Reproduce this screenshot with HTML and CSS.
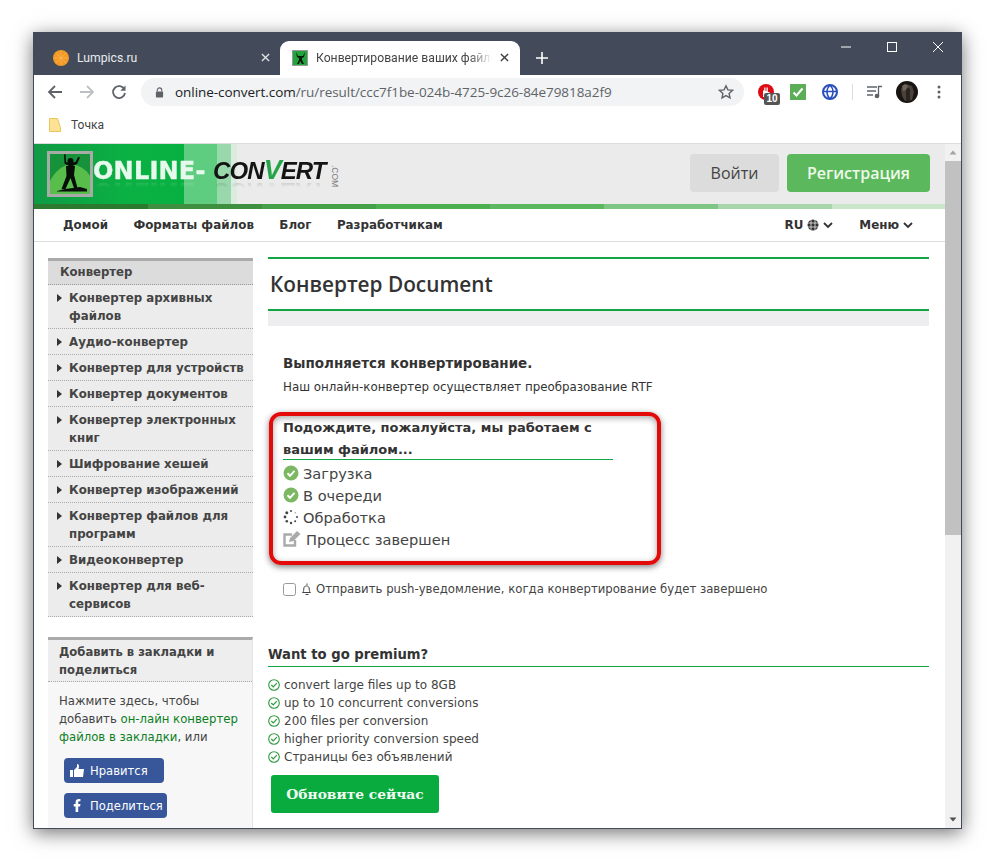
FILE: index.html
```html
<!DOCTYPE html>
<html lang="ru">
<head>
<meta charset="utf-8">
<title>Конвертирование ваших файлов</title>
<link rel="stylesheet" href="styles.css">
</head>
<body>
<div class="window">
  <div class="tabstrip">
    <div class="tab tab-off">
      <svg class="fav" viewBox="0 0 16 16"><circle cx="8" cy="8" r="8" fill="#f39a26"/><path d="M8 1v14M1 8h14M3 3l10 10M13 3L3 13" stroke="#fbb552" stroke-width=".8"/></svg>
      <span class="tab-title">Lumpics.ru</span>
      <svg class="tab-x" viewBox="0 0 10 10"><path d="M1 1l8 8M9 1L1 9" stroke="#dfe1e5" stroke-width="1.5"/></svg>
    </div>
    <div class="tab tab-on">
      <svg class="fav" viewBox="0 0 16 16"><rect width="16" height="16" fill="#9a9a9a"/><rect x="1" y="1" width="14" height="14" fill="#22a33b"/><path d="M4 2l1 5 2 1v2l-2 4h2l1-3 2 3h2l-2-4V8l2-1 1-5-2 4H6z" fill="#0a1a0c"/></svg>
      <span class="tab-title tab-title-dark">Конвертирование ваших файлов</span>
      <svg class="tab-x" viewBox="0 0 10 10"><path d="M1 1l8 8M9 1L1 9" stroke="#3c4043" stroke-width="1.6"/></svg>
    </div>
    <svg class="newtab" viewBox="0 0 12 12"><path d="M6 0v12M0 6h12" stroke="#fff" stroke-width="1.6"/></svg>
    <div class="winbtns">
      <svg viewBox="0 0 12 12"><path d="M1 6h10" stroke="#fff"/></svg>
      <svg viewBox="0 0 12 12"><rect x="1.500" y="1.500" width="9" height="9" fill="none" stroke="#fff"/></svg>
      <svg viewBox="0 0 12 12"><path d="M1 1l10 10M11 1L1 11" stroke="#fff"/></svg>
    </div>
  </div>

  <div class="toolbar">
    <svg class="nav-ic" viewBox="0 0 16 16"><path d="M15 8H2M8 2L2 8l6 6" fill="none" stroke="#5f6368" stroke-width="1.800"/></svg>
    <svg class="nav-ic" viewBox="0 0 16 16"><path d="M1 8h13M8 2l6 6-6 6" fill="none" stroke="#bdc1c6" stroke-width="1.800"/></svg>
    <svg class="nav-ic" viewBox="0 0 16 16"><path d="M13.500 5.500A6 6 0 1 0 14 9" fill="none" stroke="#5f6368" stroke-width="1.800"/><path d="M14.500 1.500v5.200H9.300z" fill="#5f6368"/></svg>
    <div class="omnibox">
      <svg class="lock" viewBox="0 0 10 12"><path d="M2.500 5V3.400a2.500 2.500 0 0 1 5 0V5" fill="none" stroke="#5f6368" stroke-width="1.200"/><rect x="1" y="5" width="8" height="6.500" rx="1" fill="#5f6368"/></svg>
      <span class="url">online-convert.com<span class="url-dim">/ru/result/ccc7f1be-024b-4725-9c26-84e79818a2f9</span></span>
      <svg class="star" viewBox="0 0 16 16"><path d="M8 1.800l1.900 4.100 4.500.5-3.300 3 .9 4.400L8 11.600l-4 2.200.9-4.400-3.300-3 4.500-.5z" fill="none" stroke="#5f6368" stroke-width="1.400"/></svg>
    </div>
    <div class="exts">
      <div class="ext ext-abp">
        <svg viewBox="0 0 16 16"><circle cx="8" cy="8" r="8" fill="#dd0b13"/><path d="M5 13V6.500h1.200V3.500h1.300V7h1V3.500h1.300V8h1.700v5z" fill="#fff"/></svg>
        <span class="badge">10</span>
      </div>
      <svg class="ext" viewBox="0 0 16 16"><rect width="16" height="16" fill="#5cad57"/><path d="M3.500 8.500l3 3 6-7" fill="none" stroke="#fff" stroke-width="2"/></svg>
      <svg class="ext" viewBox="0 0 16 16"><circle cx="8" cy="8" r="7" fill="#fff" stroke="#2a4ebd" stroke-width="2"/><path d="M8 1c-4 4-4 10 0 14M8 1c4 4 4 10 0 14M1.500 7.500h13" fill="none" stroke="#2a4ebd" stroke-width="1.500"/></svg>
      <span class="ext-sep"></span>
      <svg class="ext-media" viewBox="0 0 16 14"><path d="M0 2h10M0 6h9M0 10h6" stroke="#5f6368" stroke-width="1.300"/><path d="M11.500 11V1.500H15" fill="none" stroke="#5f6368" stroke-width="1.300"/><circle cx="10" cy="11" r="2.300" fill="#5f6368"/></svg>
      <svg class="avatar" viewBox="0 0 22 22"><circle cx="11" cy="11" r="11" fill="#191412"/><path d="M5 8l5-5 6 2 2 6-2 8-7 1-3-5z" fill="#4a413b"/><path d="M10 6l4 2v11l-4 1z" fill="#2a2421"/><path d="M6 5l3-2 3 2-2 4-3 1z" fill="#6f655d"/></svg>
      <svg class="kebab" viewBox="0 0 4 14"><circle cx="2" cy="2" r="1.500" fill="#5f6368"/><circle cx="2" cy="7" r="1.500" fill="#5f6368"/><circle cx="2" cy="12" r="1.500" fill="#5f6368"/></svg>
    </div>
  </div>

  <div class="bookmarks">
    <svg class="folder" viewBox="0 0 12 14"><path d="M.5.500h8l3 9v4H.5z" fill="#fde293" stroke="#e9c55a"/></svg>
    <span>Точка</span>
  </div>

  <div class="viewport">
    <div class="page">
      <header class="site-head">
        <div class="bands"><i class="b1"></i><i class="b2"></i><i class="b3"></i><i class="b4"></i></div>
        <div class="logo">
          <svg class="logo-ic" viewBox="0 0 46 46"><rect width="46" height="46" fill="#a8aaa8"/><rect x="3" y="3" width="40" height="40" fill="#16923a"/><path d="M3 43V30C8 20 16 14 24 13c8 1 15 5 19 12v18z" fill="#58bd4b"/><path d="M17 3.500l.5 9 6 3.500 6.500-3 3-6.500-1.800-.6-2.700 5-6.500 1-3-1-.5-7.900z" fill="#070d07"/><circle cx="23.500" cy="10" r="3" fill="#070d07"/><path d="M19 15h9l-1 9 3.500 13h-3.500l-3.500-10-5 11h-4l5-13z" fill="#070d07"/><path d="M10 40l8-2 8-1 7-1 7 2v2.500H10z" fill="#070d07"/></svg>
          <span class="logo-w">ONLINE-</span><span class="logo-k">CON<em>V</em>ERT</span><span class="logo-com">.COM</span>
        </div>
        <div class="auth">
          <a class="btn-login">Войти</a>
          <a class="btn-reg">Регистрация</a>
        </div>
      </header>
      <div class="stripes"><i class="s1"></i><i class="s2"></i><i class="s3"></i><i class="s4"></i><i class="s5"></i><i class="s6"></i><i class="s7"></i><i class="s8"></i></div>
      <nav class="mainnav">
        <a>Домой</a><a>Форматы файлов</a><a>Блог</a><a>Разработчикам</a>
        <span class="spacer"></span>
        <a class="nav-r">RU
          <svg class="globe" viewBox="0 0 12 12"><circle cx="6" cy="6" r="5.500" fill="#333"/><path d="M0 4h12M0 8h12M4 0v12M8 0v12" stroke="#fff" stroke-width=".7"/></svg>
          <svg class="chev" viewBox="0 0 10 7"><path d="M1 1l4 4 4-4" fill="none" stroke="#333" stroke-width="1.800"/></svg></a>
        <a class="nav-r">Меню
          <svg class="chev" viewBox="0 0 10 7"><path d="M1 1l4 4 4-4" fill="none" stroke="#333" stroke-width="1.800"/></svg></a>
      </nav>

      <div class="layout">
        <aside class="side">
          <section class="side-menu">
            <h3>Конвертер</h3>
            <ul>
              <li>Конвертер архивных файлов</li>
              <li>Аудио-конвертер</li>
              <li>Конвертер для устройств</li>
              <li>Конвертер документов</li>
              <li>Конвертер электронных книг</li>
              <li>Шифрование хешей</li>
              <li>Конвертер изображений</li>
              <li>Конвертер файлов для программ</li>
              <li>Видеоконвертер</li>
              <li>Конвертер для веб-сервисов</li>
            </ul>
          </section>
          <section class="side-share">
            <h4>Добавить в закладки и поделиться</h4>
            <div class="share-body">
              <p>Нажмите здесь, чтобы добавить <a>он-лайн конвертер файлов в закладки</a>, или</p>
              <a class="fb fb-like"><svg viewBox="0 0 14 13"><path d="M0 6h3v7H0zM4 6l3-3V0c2 0 2.500 2 1.500 5H14l-1 8H4z" fill="#fff"/></svg>Нравится</a>
              <a class="fb fb-share"><svg class="fb-f" viewBox="0 0 8 14"><path d="M2.500 14V8H.5V5.500h2V3.500C2.500 1 4 0 6 0h1.700v2.400H6.500c-1 0-1.200.5-1.200 1.200v1.900h2.400L7.300 8H5.300v6z" fill="#fff"/></svg>Поделиться</a>
            </div>
          </section>
        </aside>

        <main class="content">
          <h1>Конвертер Document</h1>
          <div class="grayband"></div>
          <div class="progress-box">
            <h2>Выполняется конвертирование.</h2>
            <p class="sub">Наш онлайн-конвертер осуществляет преобразование RTF</p>
            <h3 class="wait">Подождите, пожалуйста, мы работаем с вашим файлом...</h3>
            <ul class="steps">
              <li><svg class="st" viewBox="0 0 16 16"><circle cx="8" cy="8" r="7.500" fill="#7cb863"/><path d="M4.500 8.300l2.500 2.500 4.500-5" fill="none" stroke="#fff" stroke-width="2"/></svg>Загрузка</li>
              <li><svg class="st" viewBox="0 0 16 16"><circle cx="8" cy="8" r="7.500" fill="#7cb863"/><path d="M4.500 8.300l2.500 2.500 4.500-5" fill="none" stroke="#fff" stroke-width="2"/></svg>В очереди</li>
              <li><svg class="st" viewBox="0 0 16 16"><g fill="#444"><circle cx="8" cy="2" r="1"/><circle cx="3.800" cy="3.800" r="1.500"/><circle cx="2" cy="8" r="1.400"/><circle cx="3.800" cy="12.200" r="1.300"/><circle cx="8" cy="14" r="1.200"/><circle cx="12.200" cy="12.200" r="1"/><circle cx="14" cy="8" r="1"/><circle cx="12.200" cy="3.800" r=".5"/></g></svg>Обработка</li>
              <li class="st-last"><svg class="st st-edit" viewBox="0 0 18 16"><path d="M12 9v5.500H1.500V3.500H9" fill="none" stroke="#aaa" stroke-width="2.400"/><path d="M6 11l1-4 7-7 3.500 3-7 7z" fill="#aaa"/></svg>Процесс завершен</li>
            </ul>
            <label class="push"><input type="checkbox" class="push-cb"><svg class="bell" viewBox="0 0 12 12"><path d="M1.500 9.500c1.500-1 1-3 1.500-5s4.500-2 5 0 0 4 1.500 5zM4.500 11.500h3M6 .5v1.500" fill="none" stroke="#444"/></svg>Отправить push-уведомление, когда конвертирование будет завершено</label>
          </div>
          <h2 class="prem">Want to go premium?</h2>
          <ul class="perks">
            <li><svg viewBox="0 0 12 12"><circle cx="6" cy="6" r="5.300" fill="none" stroke="#2f9a41" stroke-width="1.100"/><path d="M3.300 6l2 2 3.500-3.800" fill="none" stroke="#2f9a41" stroke-width="1.200"/></svg>convert large files up to 8GB</li>
            <li><svg viewBox="0 0 12 12"><circle cx="6" cy="6" r="5.300" fill="none" stroke="#2f9a41" stroke-width="1.100"/><path d="M3.300 6l2 2 3.500-3.800" fill="none" stroke="#2f9a41" stroke-width="1.200"/></svg>up to 10 concurrent conversions</li>
            <li><svg viewBox="0 0 12 12"><circle cx="6" cy="6" r="5.300" fill="none" stroke="#2f9a41" stroke-width="1.100"/><path d="M3.300 6l2 2 3.500-3.800" fill="none" stroke="#2f9a41" stroke-width="1.200"/></svg>200 files per conversion</li>
            <li><svg viewBox="0 0 12 12"><circle cx="6" cy="6" r="5.300" fill="none" stroke="#2f9a41" stroke-width="1.100"/><path d="M3.300 6l2 2 3.500-3.800" fill="none" stroke="#2f9a41" stroke-width="1.200"/></svg>higher priority conversion speed</li>
            <li><svg viewBox="0 0 12 12"><circle cx="6" cy="6" r="5.300" fill="none" stroke="#2f9a41" stroke-width="1.100"/><path d="M3.300 6l2 2 3.500-3.800" fill="none" stroke="#2f9a41" stroke-width="1.200"/></svg>Страницы без объявлений</li>
          </ul>
          <a class="btn-up">Обновите сейчас</a>
        </main>
      </div>
    </div>
    <div class="scrollbar">
      <svg class="sb-arrow" viewBox="0 0 16 17"><path d="M4.500 10.500L8 6.500l3.500 4z" fill="#a3a3a3"/></svg>
      <div class="sb-track"><div class="sb-thumb"></div></div>
      <svg class="sb-arrow" viewBox="0 0 16 17"><path d="M4.500 6.500L8 10.500l3.500-4z" fill="#505050"/></svg>
    </div>
    <div class="redbox"></div>
  </div>
</div>
</body>
</html>
```
FILE: styles.css
```css
* { box-sizing: border-box; }
html, body { margin: 0; height: 100%; overflow: hidden; background: #fff; }
body { padding: 32px 32px 0 33px; font-family: "DejaVu Sans", Verdana, sans-serif; color: #333; }
ul { list-style: none; margin: 0; padding: 0; }
h1, h2, h3, h4, p { margin: 0; }

.window { width: 929px; height: 797px; display: flex; flex-direction: column; background: #fff; border: solid #434a5a; border-width: 0 1px 1px 1px; box-shadow: 0 4px 18px rgba(0,0,0,.55); }

.tabstrip { height: 43px; flex: none; background: #434a5a; display: flex; align-items: flex-end; position: relative; }
.tab { height: 34px; display: flex; align-items: center; font-family: Roboto, "Noto Sans", sans-serif; font-size: 12.200px; }
.tab-off { width: 246px; padding: 0 0 1px 19px; color: #e8eaed; }
.tab-on { width: 240px; padding: 0 0 1px 12px; background: #fff; border-radius: 9px 9px 0 0; color: #444; }
.fav { width: 16px; height: 16px; flex: none; margin-right: 8px; }
.tab-title { flex: 1; overflow: hidden; white-space: nowrap; }
.tab-title-dark { -webkit-mask-image: linear-gradient(90deg, #000 85%, transparent 98%); mask-image: linear-gradient(90deg, #000 85%, transparent 98%); }
.tab-x { width: 9px; height: 9px; flex: none; margin: 0 10px 0 8px; }
.tab-on .tab-x { margin: 0 11px 0 4px; }
.newtab { width: 12px; height: 12px; margin: 0 0 11px 16px; }
.winbtns { position: absolute; top: 0; right: 0; display: flex; gap: 34px; padding: 9px 17px 0 0; }
.winbtns svg { width: 12px; height: 12px; }

.toolbar { height: 34px; flex: none; display: flex; align-items: center; padding: 0 14px 0 13px; background: #fff; }
.nav-ic { width: 16px; height: 16px; margin-right: 16px; flex: none; }
.omnibox { width: 603px; height: 28px; margin-left: -2px; border-radius: 14px; background: #f1f3f4; display: flex; align-items: center; padding: 0 10px 0 14px; font-family: "Open Sans", "Noto Sans", sans-serif; font-size: 13.500px; letter-spacing: -.05px; }
.lock { width: 9px; height: 11px; margin-right: 11px; flex: none; }
.url { flex: 1; color: #202124; white-space: nowrap; overflow: hidden; }
.url-dim { color: #5f6368; }
.star { width: 16px; height: 16px; flex: none; }
.exts { flex: 1; display: flex; align-items: center; position: relative; padding-left: 14px; }
.ext { width: 16px; height: 16px; flex: none; margin-right: 16px; display: block; position: relative; }
.ext-abp svg { width: 16px; height: 16px; display: block; }
.badge { position: absolute; left: 6px; top: 9px; width: 16px; height: 12px; border-radius: 2px; background: #555; color: #fff; font: bold 10px/12px "Liberation Sans", sans-serif; text-align: center; }
.ext-sep { width: 1px; height: 16px; background: #dadce0; margin-right: 14px; margin-left: -2px; }
.ext-media { width: 16px; height: 14px; flex: none; margin-right: 13px; }
.avatar { width: 22px; height: 22px; flex: none; margin-right: 19px; }
.kebab { width: 4px; height: 14px; flex: none; }

.bookmarks { height: 35px; flex: none; display: flex; align-items: center; padding: 0 0 2px 15px; font-family: Roboto, "Noto Sans", sans-serif; font-size: 12px; color: #444; border-bottom: 1px solid #dadce0; background: #fff; }
.folder { width: 12px; height: 14px; margin-right: 10px; }

.viewport { flex: 1; min-height: 0; display: flex; position: relative; overflow: hidden; }
.page { width: 911px; flex: none; overflow: hidden; }

.site-head { height: 60px; background: #ebebeb; display: flex; align-items: flex-start; position: relative; }
.bands { position: absolute; inset: 0 auto 0 0; display: flex; }
.bands i { display: block; height: 100%; }
.b1 { width: 150px; background: linear-gradient(90deg, #109a45, #0bb043 60%, #07b141); }
.b2 { width: 33px; background: #5ecd80; }
.b3 { width: 14px; background: #98d8ab; }
.b4 { width: 6px; background: #dcebe0; }
.logo { position: relative; display: flex; align-items: flex-start; padding: 7px 0 0 13px; font-weight: bold; }
.logo-ic { width: 46px; height: 46px; flex: none; margin-right: 0; }
.logo-w, .logo-k { display: block; margin-top: 6px; line-height: 28px; white-space: nowrap; -webkit-box-reflect: below -8px linear-gradient(transparent 62%, rgba(255,255,255,.28)); }
.logo-w { font-family: "DejaVu Sans", sans-serif; font-size: 24px; color: #e6f9ec; -webkit-text-stroke: .4px #e6f9ec; letter-spacing: .2px; width: 120px; }
.logo-k { font-family: "Liberation Sans", Arial, sans-serif; font-size: 24px; font-style: italic; color: #141414; letter-spacing: -.9px; }
.logo-k em { color: #25a548; font-style: italic; font-size: 27px; line-height: 20px; }
.logo-com { font-family: "Liberation Sans", Arial, sans-serif; font-size: 8.500px; font-weight: normal; color: #777; transform: rotate(90deg); width: 20px; margin: 19px 0 0 -1px; white-space: nowrap; }
.auth { margin-left: auto; display: flex; gap: 8px; padding: 10px 15px 0 0; position: relative; }
.btn-login, .btn-reg { height: 38px; display: flex; align-items: center; justify-content: center; border-radius: 4px; font-family: "Open Sans", "Noto Sans", sans-serif; font-size: 16px; }
.btn-login { width: 89px; background: #dcdcdc; color: #444; }
.btn-reg { width: 143px; background: #5cb85c; color: #eef9ea; font-weight: 600; }

.stripes { height: 5px; display: flex; }
.stripes i { flex: 0 0 114px; display: block; }
.s1 { background: #2b7a2f; } .s2 { background: #3f8f41; } .s3 { background: #45a049; } .s4 { background: #4caf50; }
.s5 { background: #5cb860; } .s6 { background: #7fc583; } .s7 { background: #a9d5aa; } .s8 { background: #c9e5ca; }

.mainnav { height: 33px; display: flex; align-items: center; border-bottom: 1px solid #ddd; padding: 0 32px 1px 29px; font-size: 11.900px; font-weight: bold; color: #333; }
.mainnav a { margin-right: 25.400px; white-space: nowrap; display: flex; align-items: center; }
.mainnav .nav-r { margin-right: 0; margin-left: 26px; }
.spacer { flex: 1; }
.globe { width: 12px; height: 12px; margin: 1px 0 0 4px; }
.chev { width: 10px; height: 7px; margin: 1px 0 0 4px; }

.layout { display: flex; align-items: flex-start; padding: 16px 16px 0 14px; gap: 15px; }
.side { width: 205px; flex: none; }
.side-menu { border-top: 3px solid #aaa; background: #ececec; }
.side-menu h3 { height: 24px; background: #dcdcdc; border-bottom: 1px dotted #999; font-size: 11.700px; line-height: 23px; padding-left: 12px; font-weight: bold; color: #444; }
.side-menu li { position: relative; padding: 4px 4px 3px 21px; font-size: 11.800px; line-height: 18px; font-weight: bold; color: #444; border-bottom: 1px dotted #aaa; }
.side-menu li::before { content: ""; position: absolute; left: 9px; top: 9px; border: solid transparent; border-width: 4.500px 0 4.500px 5px; border-left-color: #333; }
.side-share { margin-top: 20px; border-top: 3px solid #aaa; background: #f7f7f8; border-right: 1px solid #e4e4e4; height: 200px; }
.side-share h4 { background: #eee; border-bottom: 1px dotted #aaa; padding: 3px 11px 2px; font-size: 11.600px; line-height: 18px; font-weight: bold; color: #444; }
.share-body { padding: 10px 0 0 11px; font-size: 11.700px; line-height: 18px; color: #444; }
.share-body p a { color: #0d7f1e; }
.fb { display: flex; align-items: center; height: 25px; margin: 0 0 10px 5px; background: #38579a; color: #fff; border-radius: 4px; font-size: 11.600px; padding-left: 6px; }
.fb svg { width: 14px; height: 13px; margin-right: 6px; }
.fb .fb-f { width: 8px; height: 13px; margin: 0 9px 0 3px; }
.fb-like { width: 100px; margin-top: 12px; }
.fb-share { width: 103px; }

.content { flex: 1; min-width: 0; margin-top: -1px; }
.content h1 { height: 54px; border-top: 2px solid #12a544; border-bottom: 2px solid #12a544; padding-left: 2px; font-size: 20.800px; line-height: 51px; font-weight: 600; color: #333; font-family: "Open Sans", sans-serif; }
.grayband { height: 15px; background: #eeeef0; }
.progress-box { padding: 28px 0 0 15px; }
.progress-box h2 { font-size: 13.500px; line-height: 18px; font-weight: bold; }
.sub { margin-top: 6px; font-size: 11.850px; line-height: 18px; }
.wait { width: 330px; height: 45px; margin-top: 19px; padding-top: 2px; border-bottom: 1px solid #12a544; font-size: 13px; line-height: 22px; font-weight: bold; }
.steps { margin-top: 2px; }
.steps li { height: 22px; display: flex; align-items: center; font-size: 14.600px; color: #444; }
.st { width: 16px; height: 16px; margin-right: 4px; flex: none; }
.st-edit { width: 18px; margin-right: 5px; }
.push { display: flex; align-items: center; margin-top: 30px; font-size: 11.700px; line-height: 18px; color: #444; }
.push-cb { width: 13px; height: 13px; margin: 0 5px 0 0; opacity: .75; }
.bell { width: 12px; height: 12px; margin-right: 3px; }
.prem { margin-top: 47px; height: 22px; border-bottom: 1px solid #12a544; font-size: 13.200px; line-height: 20px; font-weight: bold; color: #333; }
.perks { margin-top: 9px; }
.perks li { height: 18px; display: flex; align-items: center; font-size: 12px; color: #444; }
.perks svg { width: 12px; height: 12px; margin-right: 4px; flex: none; }
.btn-up { margin: 9px 0 0 3px; width: 168px; height: 38px; display: flex; align-items: center; justify-content: center; background: #09ab3f; color: #f2fbf4; font-family: "DejaVu Serif", serif; font-weight: bold; font-size: 13.800px; border-radius: 3px; }

.scrollbar { flex: 1; display: flex; flex-direction: column; background: #f1f1f1; }
.sb-arrow { width: 16px; height: 17px; flex: none; }
.sb-track { flex: 1; }
.sb-thumb { height: 374px; background: #c1c1c1; }

.redbox { position: absolute; left: 235px; top: 268px; width: 392px; height: 153px; border: 4px solid #e50a0a; border-radius: 12px; box-shadow: 0 2px 6px rgba(0,0,0,.5), inset 0 2px 6px rgba(0,0,0,.35); pointer-events: none; }
```
